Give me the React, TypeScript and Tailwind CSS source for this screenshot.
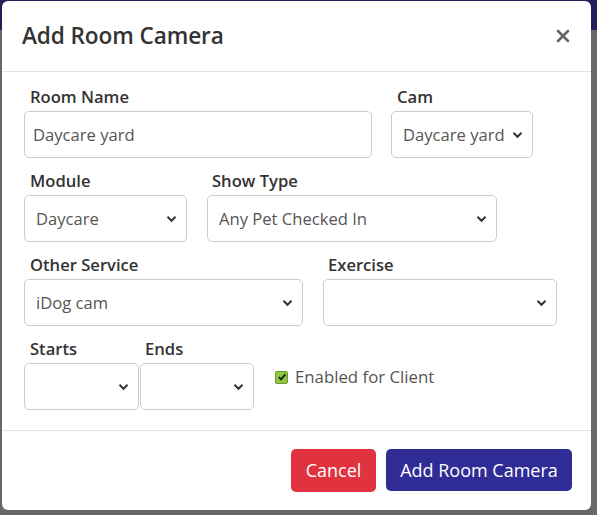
import React from "react";

const font = { fontFamily: '"Open Sans", "Noto Sans", sans-serif' };

function Chevron() {
  return (
    <svg width="11" height="8" viewBox="0 0 11 8" className="shrink-0">
      <path d="M1.5 1.8 L5.5 5.8 L9.5 1.8" fill="none" stroke="#333" strokeWidth="2" />
    </svg>
  );
}

function Field({ label, w, children, lx = "pl-[6px]" }: { label: string; w: string; children: React.ReactNode; lx?: string }) {
  return (
    <div className={`flex flex-col ${w}`}>
      <div className={`${lx} h-[21px] mb-[4px] text-[16.6px] leading-[21px] font-semibold text-[#333] whitespace-nowrap`}>{label}</div>
      {children}
    </div>
  );
}

function Select({ value = "" }: { value?: string }) {
  return (
    <div className="h-[47px] w-full rounded-[5px] border border-[#cdcdcd] bg-white flex items-center justify-between pl-[11px] pr-[9px] text-[16.6px] text-[#555]">
      <span className="whitespace-nowrap overflow-hidden pt-[2px]">{value}</span>
      <Chevron />
    </div>
  );
}

export default function App() {
  return (
    <div style={font} className="relative w-[597px] h-[515px] bg-[#676767] overflow-hidden">
      <div className="absolute left-0 top-0 w-full h-[30px] bg-[#22205a]" />
      <div className="absolute left-[2px] top-[1px] w-[589px] h-[509px] bg-white rounded-[6px] flex flex-col">
        <div className="h-[72px] border-b border-[#e4e4e4] flex items-center justify-between pl-[20px] pr-[21px]">
          <div className="text-[22.6px] font-semibold text-[#333] tracking-[-0.1px]">Add Room Camera</div>
          <svg width="14" height="14" viewBox="0 0 14 14">
            <path d="M2 2 L12 12 M12 2 L2 12" stroke="#666" strokeWidth="2.6" strokeLinecap="round" />
          </svg>
        </div>
        <div className="flex-1 px-[22px] pt-[14px] pb-[20px] flex flex-col gap-[12px] border-b border-[#e4e4e4]">
          <div className="flex gap-[19px]">
            <Field label="Room Name" w="w-[348px]">
              <div className="h-[47px] rounded-[5px] border border-[#cdcdcd] bg-white flex items-center pl-[8px] pt-[2px] text-[16.6px] text-[#555]">Daycare yard</div>
            </Field>
            <Field label="Cam" w="w-[142px]">
              <Select value="Daycare yard" />
            </Field>
          </div>
          <div className="flex gap-[20px]">
            <Field label="Module" w="w-[163px]">
              <Select value="Daycare" />
            </Field>
            <Field label="Show Type" w="w-[290px]" lx="pl-[5px]">
              <Select value="Any Pet Checked In" />
            </Field>
          </div>
          <div className="flex gap-[20px]">
            <Field label="Other Service" w="w-[279px]">
              <Select value="iDog cam" />
            </Field>
            <Field label="Exercise" w="w-[234px]" lx="pl-[5px]">
              <Select />
            </Field>
          </div>
          <div className="flex gap-[1px]">
            <Field label="Starts" w="w-[115px]">
              <Select />
            </Field>
            <Field label="Ends" w="w-[114px]" lx="pl-[5px]">
              <Select />
            </Field>
            <div className="ml-[20px] pt-[24px] flex items-start">
              <div className="flex items-center gap-[7px] h-[30px]">
                <div className="w-[13px] h-[13px] rounded-[2px] bg-[#8dc63f] border border-[#6a9a2c] flex items-center justify-center">
                  <svg width="10" height="10" viewBox="0 0 10 10">
                    <path d="M1.8 5.2 L4 7.4 L8.4 2.4" fill="none" stroke="#1a1a1a" strokeWidth="1.8" />
                  </svg>
                </div>
                <span className="text-[16.8px] text-[#555]">Enabled for Client</span>
              </div>
            </div>
          </div>
        </div>
        <div className="h-[80px] flex items-center justify-end gap-[10px] pr-[19px] pb-[1px]">
          <div className="h-[43px] w-[85px] rounded-[5px] bg-[#e0323f] text-white text-[18px] flex items-center justify-center">Cancel</div>
          <div className="h-[42px] w-[186px] rounded-[5px] bg-[#302c96] text-white text-[18px] flex items-center justify-center">Add Room Camera</div>
        </div>
      </div>
    </div>
  );
}
